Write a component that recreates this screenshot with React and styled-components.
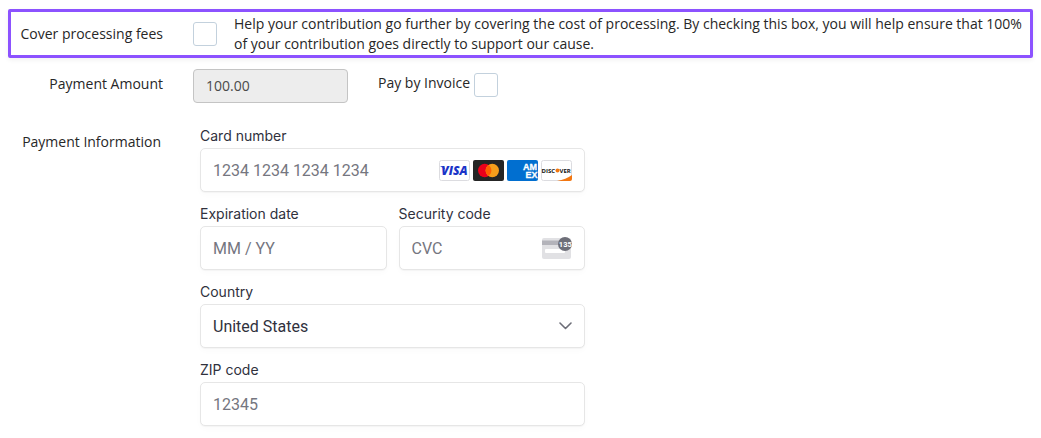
import React, { useState } from "react";
import styled, { createGlobalStyle } from "styled-components";

const GlobalStyle = createGlobalStyle`
  *, *::before, *::after {
    box-sizing: border-box;
  }
  body {
    margin: 0;
    background: #fff;
    color: #272727;
    font-family: "Open Sans", "Noto Sans", sans-serif;
    font-size: 14px;
    line-height: 20px;
  }
`;

const Form = styled.form`
  padding: 9px 8px 12px;
`;

const Row = styled.div`
  display: flex;
  align-items: flex-start;
  gap: 30px;
  padding: 0 3px;
`;

const HighlightRow = styled(Row)`
  align-items: center;
  padding: 2px 8px 1px 0;
  border: 3px solid #8c52ff;
  border-radius: 2px;
  box-shadow: 0 2px 5px rgba(0, 0, 0, 0.06);
`;

const AmountRow = styled(Row)`
  margin-top: 11px;
`;

const CardRow = styled(Row)`
  margin-top: 23px;
`;

const RowLabel = styled.label`
  flex: none;
  width: 152px;
  padding-top: ${(props) => props.$top || 0}px;
  padding-right: ${(props) => props.$right || 0}px;
  text-align: right;
`;

const FeeOption = styled.div`
  flex: 1;
  display: flex;
  align-items: center;
  gap: 17px;
`;

const FeeText = styled.p`
  flex: 1;
  margin: 0;
`;

const Checkbox = styled.input`
  appearance: none;
  flex: none;
  width: 24px;
  height: 24px;
  margin: 0;
  border: 1px solid #c3d1dd;
  border-radius: 3px;
  background: #fff;
  cursor: pointer;

  &:checked {
    background: #8c52ff;
    box-shadow: inset 0 0 0 4px #fff;
  }
`;

const AmountInput = styled.input`
  width: 155px;
  height: 34px;
  padding: 0 12px 2px;
  border: 1px solid #c4c4c4;
  border-radius: 4px;
  background: #ededed;
  color: #4a4a4a;
  font: inherit;
`;

const InvoiceLabel = styled.label`
  display: flex;
  gap: 4px;
  padding-top: 4px;
`;

const CardFields = styled.div`
  flex: 1;
  display: grid;
  grid-template-columns: repeat(2, minmax(0, 1fr));
  gap: 12px;
  max-width: 392px;
  padding-left: 7px;
`;

const Field = styled.div`
  grid-column: ${(props) => (props.$half ? "auto" : "1 / -1")};
`;

const FieldLabel = styled.label`
  display: block;
  margin-bottom: 2px;
  color: #30313d;
  font-family: Inter, "Liberation Sans", sans-serif;
  font-size: 14px;
`;

const Control = styled.div`
  display: flex;
  align-items: center;
  height: 44px;
  padding-right: 12px;
  border: 1px solid #e6e6e6;
  border-radius: 5px;
  background: #fff;
  box-shadow: 0 1px 1px rgba(0, 0, 0, 0.03), 0 3px 6px rgba(0, 0, 0, 0.02);

  > svg {
    flex: none;
  }
`;

const TextInput = styled.input`
  flex: 1;
  min-width: 0;
  height: 100%;
  padding: 0 0 0 12px;
  border: 0;
  outline: 0;
  background: transparent;
  color: #30313d;
  font-family: Roboto, "Liberation Sans", sans-serif;
  font-size: 16px;

  &::placeholder {
    color: #757680;
    opacity: 1;
  }
`;

const Select = styled.select`
  appearance: none;
  flex: 1;
  min-width: 0;
  height: 100%;
  padding: 0 0 0 12px;
  border: 0;
  outline: 0;
  background: transparent;
  color: #30313d;
  font-family: Roboto, "Liberation Sans", sans-serif;
  font-size: 16px;
`;

const Brands = styled.div`
  display: flex;
  gap: 3px;

  svg {
    display: block;
  }
`;

const Visa = () => (
  <svg width="31" height="21" viewBox="0 0 31 21" role="img" aria-label="Visa">
    <rect x="0.5" y="0.5" width="30" height="20" rx="2" fill="#fff" stroke="#dcdce0" />
    <text x="15.5" y="15" textAnchor="middle" fontFamily="Open Sans, sans-serif" fontSize="12" fontWeight="800" fontStyle="italic" fill="#1a34c8">VISA</text>
    <path d="M1.5 6.300h3.500l1.400 4.200C5.400 8.600 4 7.300 1.500 6.700z" fill="#1a34c8" />
  </svg>
);

const Mastercard = () => (
  <svg width="31" height="21" viewBox="0 0 31 21" role="img" aria-label="Mastercard">
    <rect width="31" height="21" rx="2" fill="#252525" />
    <circle cx="11.700" cy="10.500" r="6.700" fill="#eb001b" />
    <circle cx="19.300" cy="10.500" r="6.700" fill="#f79e1b" />
    <path d="M15.500 5a6.700 6.700 0 0 1 0 11a6.700 6.700 0 0 1 0-11z" fill="#ff5f00" />
  </svg>
);

const Amex = () => (
  <svg width="31" height="21" viewBox="0 0 31 21" role="img" aria-label="American Express">
    <rect width="31" height="21" rx="2" fill="#016fd0" />
    <g fontFamily="Liberation Sans, sans-serif" fontSize="9" fontWeight="700" fill="#fff" stroke="#fff" strokeWidth="0.300">
      <text x="16" y="9.500">AM</text>
      <text x="18.500" y="18">EX</text>
    </g>
  </svg>
);

const Discover = () => (
  <svg width="31" height="21" viewBox="0 0 31 21" role="img" aria-label="Discover">
    <rect x="0.500" y="0.500" width="30" height="20" rx="2" fill="#fff" stroke="#dcdce0" />
    <path d="M16 21c6-1 11-3 15-6v4a2 2 0 0 1-2 2z" fill="#f27712" />
    <g fontFamily="Open Sans, sans-serif" fontSize="6" fontWeight="700" fill="#111">
      <text x="0.500" y="12.500">DISC</text>
      <text x="18.500" y="12.500">VER</text>
    </g>
    <circle cx="16.500" cy="10.400" r="2" fill="#f27712" />
  </svg>
);

const CvcIcon = () => (
  <svg width="30" height="24" viewBox="0 0 30 24" aria-hidden="true">
    <rect y="2" width="29" height="21" rx="2" fill="#e1e1e4" />
    <rect y="4.500" width="29" height="4.500" fill="#b3b3ba" />
    <rect x="3" y="13" width="20" height="4" rx="1" fill="#fff" />
    <circle cx="23" cy="8" r="7" fill="#6d6e78" />
    <text x="23.300" y="10.800" textAnchor="middle" fontFamily="Roboto, sans-serif" fontSize="7.500" fontWeight="700" fill="#fff">135</text>
  </svg>
);

const Chevron = () => (
  <svg width="13" height="8" viewBox="0 0 13 8" aria-hidden="true">
    <path d="M1 1l5.500 5.500L12 1" fill="none" stroke="#6d6e78" strokeWidth="1.600" strokeLinecap="round" strokeLinejoin="round" />
  </svg>
);

const App = () => {
  const [coverFees, setCoverFees] = useState(false);
  const [byInvoice, setByInvoice] = useState(false);

  return (
    <Form>
      <GlobalStyle />
      <HighlightRow>
        <RowLabel htmlFor="coverFees">Cover processing fees</RowLabel>
        <FeeOption>
          <Checkbox
            type="checkbox"
            id="coverFees"
            aria-describedby="feeText"
            checked={coverFees}
            onChange={() => setCoverFees(!coverFees)}
          />
          <FeeText id="feeText">
            Help your contribution go further by covering the cost of processing. By checking this box, you will help ensure that 100% of your contribution goes directly to support our cause.
          </FeeText>
        </FeeOption>
      </HighlightRow>

      <AmountRow>
        <RowLabel htmlFor="amount" $top={5}>Payment Amount</RowLabel>
        <AmountInput id="amount" defaultValue="100.00" disabled />
        <InvoiceLabel>
          Pay by Invoice
          <Checkbox type="checkbox" checked={byInvoice} onChange={() => setByInvoice(!byInvoice)} />
        </InvoiceLabel>
      </AmountRow>

      <CardRow>
        <RowLabel as="div" $top={6} $right={2}>Payment Information</RowLabel>
        <CardFields>
          <Field>
            <FieldLabel htmlFor="cardNumber">Card number</FieldLabel>
            <Control>
              <TextInput id="cardNumber" placeholder="1234 1234 1234 1234" />
              <Brands>
                <Visa />
                <Mastercard />
                <Amex />
                <Discover />
              </Brands>
            </Control>
          </Field>
          <Field $half>
            <FieldLabel htmlFor="expiry">Expiration date</FieldLabel>
            <Control>
              <TextInput id="expiry" placeholder="MM / YY" />
            </Control>
          </Field>
          <Field $half>
            <FieldLabel htmlFor="cvc">Security code</FieldLabel>
            <Control>
              <TextInput id="cvc" placeholder="CVC" />
              <CvcIcon />
            </Control>
          </Field>
          <Field>
            <FieldLabel htmlFor="country">Country</FieldLabel>
            <Control>
              <Select id="country" defaultValue="US">
                <option value="US">United States</option>
                <option value="CA">Canada</option>
              </Select>
              <Chevron />
            </Control>
          </Field>
          <Field>
            <FieldLabel htmlFor="zip">ZIP code</FieldLabel>
            <Control>
              <TextInput id="zip" placeholder="12345" />
            </Control>
          </Field>
        </CardFields>
      </CardRow>
    </Form>
  );
};

export default App;
